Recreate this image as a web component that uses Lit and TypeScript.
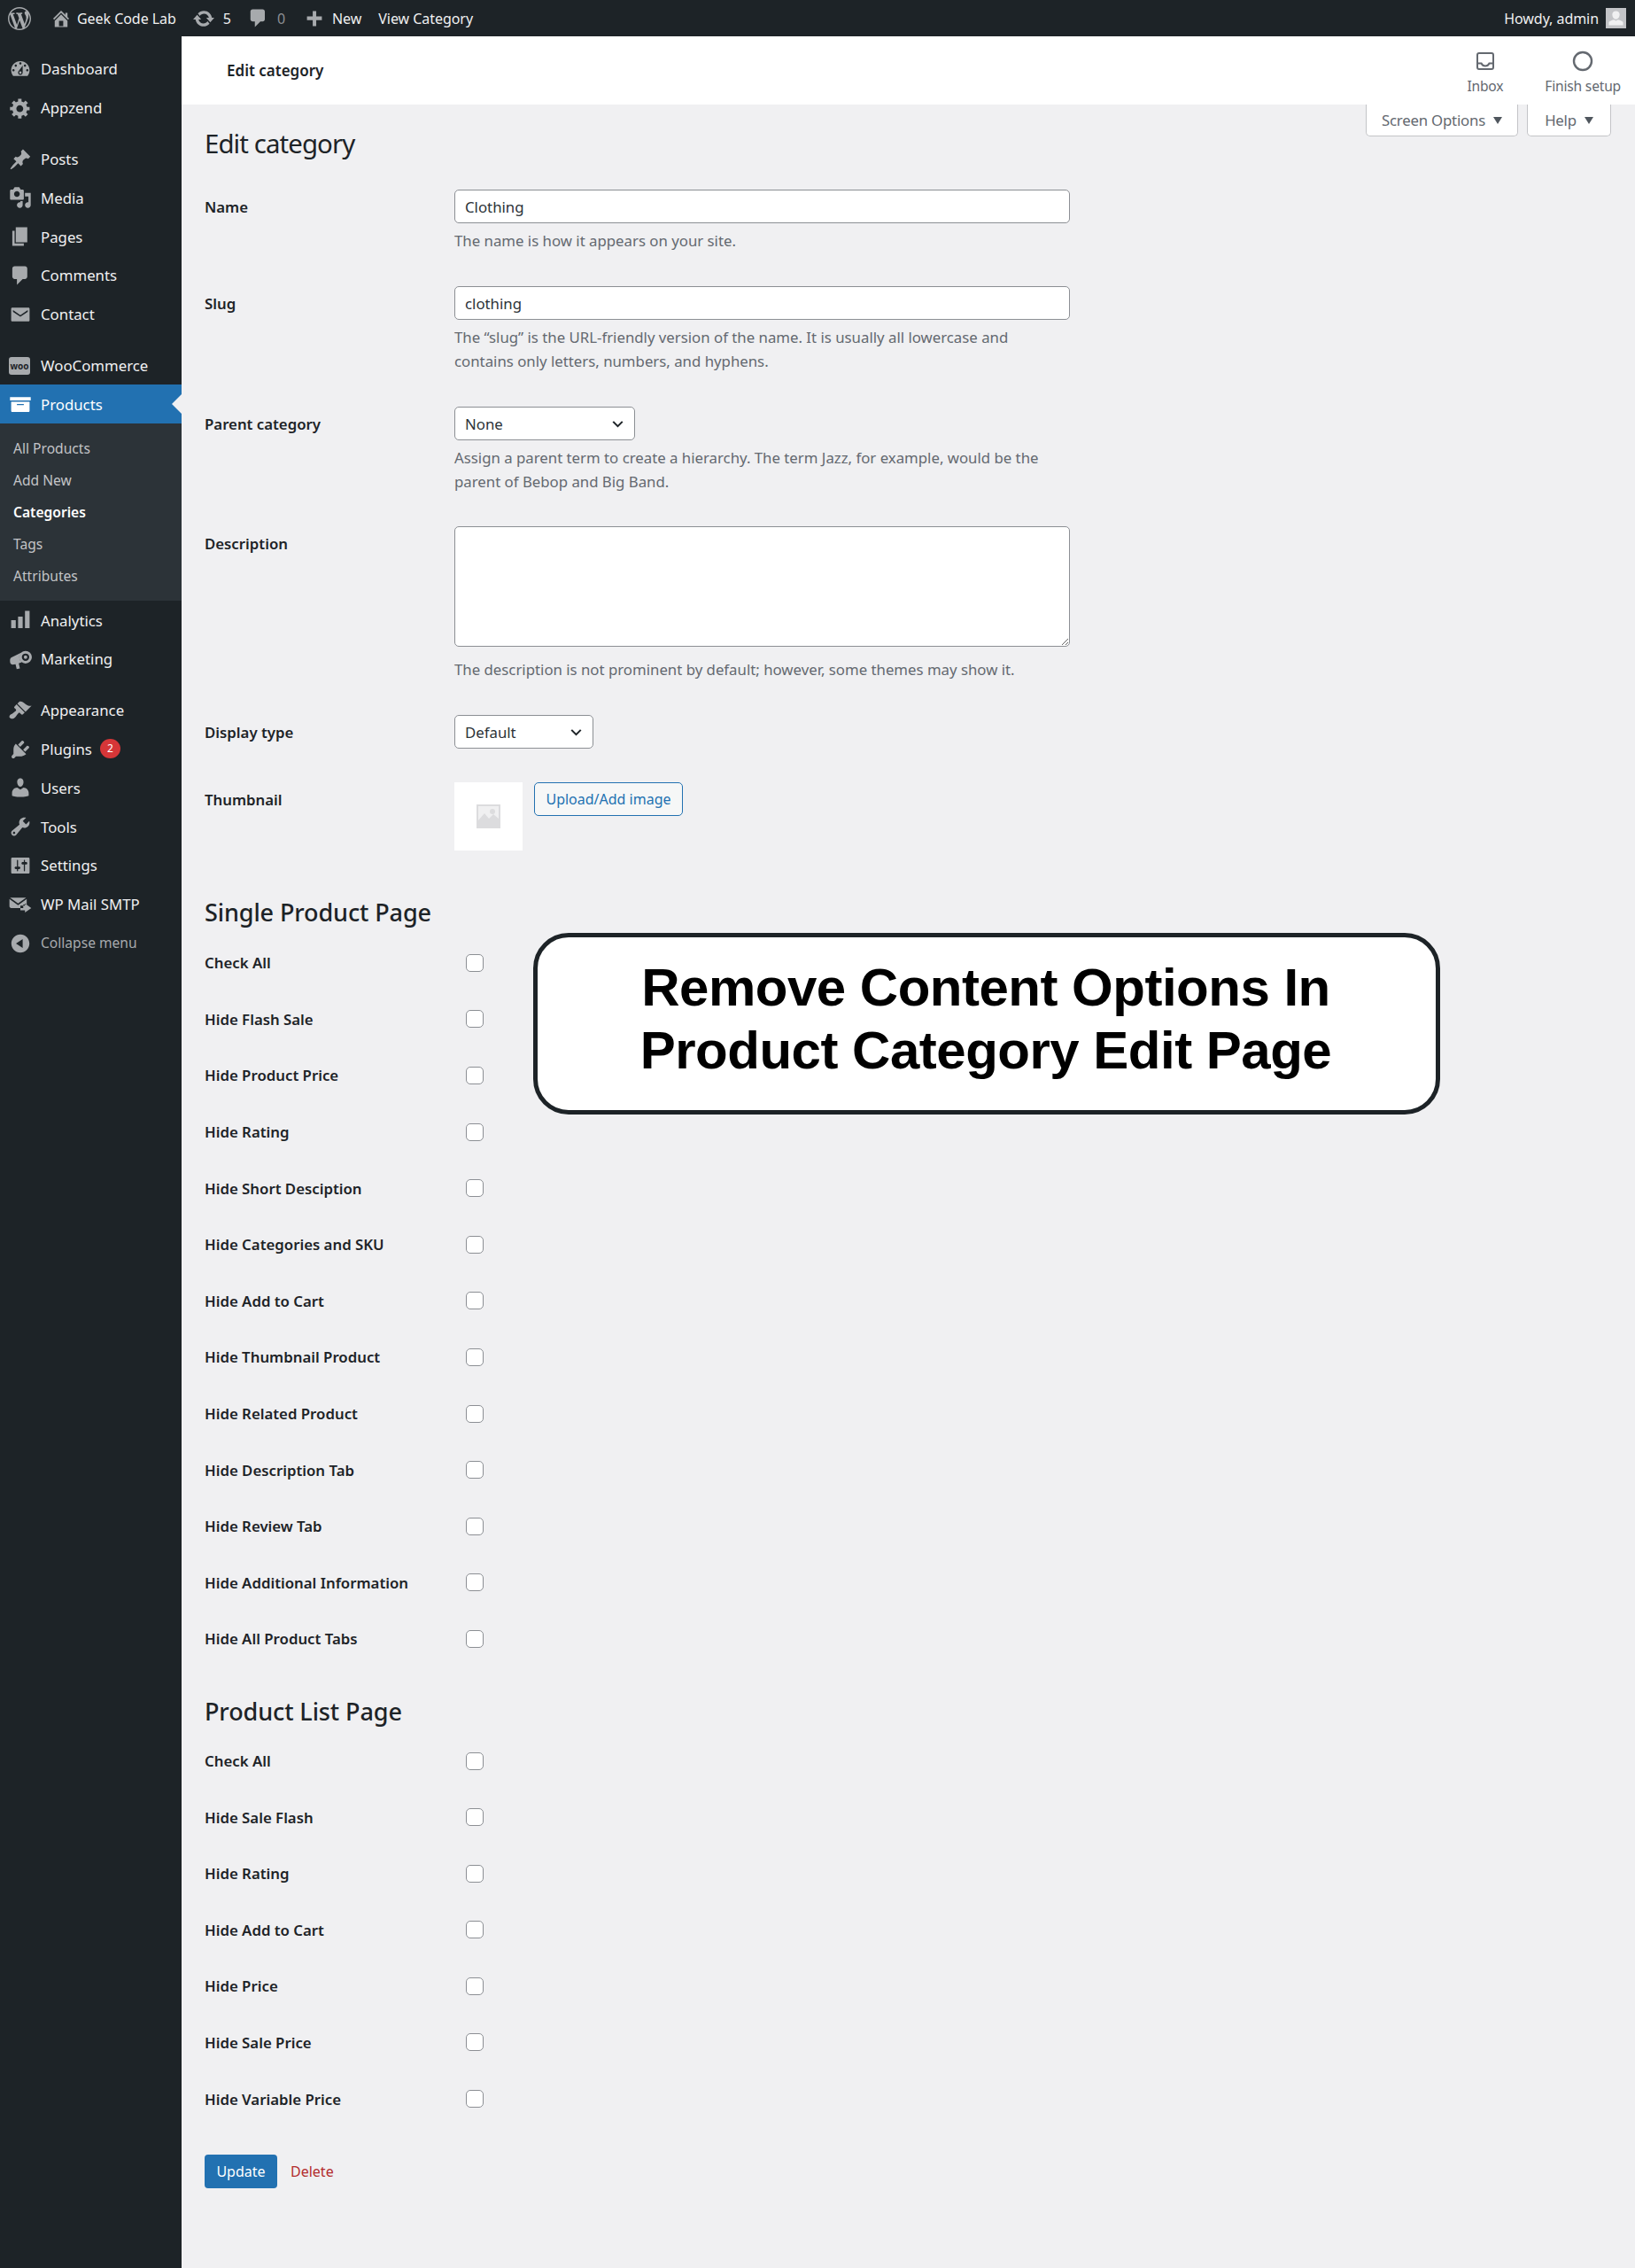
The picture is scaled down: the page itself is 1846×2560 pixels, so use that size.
import { LitElement, html, css } from 'lit';
import { customElement } from 'lit/decorators.js';

// dashicons, 20x20 box
const ICONS: Record<string, string> = {
    wp: 'M20 10c0-5.51-4.49-10-10-10C4.48 0 0 4.49 0 10c0 5.52 4.48 10 10 10 5.51 0 10-4.48 10-10zM7.78 15.37L4.37 6.22c.55-.02 1.17-.08 1.17-.08.5-.06.44-1.13-.06-1.11 0 0-1.45.11-2.37.11-.18 0-.37 0-.58-.01C4.12 2.69 6.87 1.11 10 1.11c2.33 0 4.45.87 6.05 2.34-.68-.11-1.65.39-1.65 1.58 0 .74.45 1.36.9 2.1.35.61.55 1.36.55 2.46 0 1.49-1.4 5-1.4 5l-3.03-8.37c.54-.02.82-.17.82-.17.5-.05.44-1.25-.06-1.22 0 0-1.44.12-2.38.12-.87 0-2.33-.12-2.33-.12-.5-.03-.56 1.2-.06 1.22l.92.08 1.26 3.41zM17.41 10c.24-.64.74-1.87.43-4.25.7 1.29 1.05 2.71 1.05 4.25 0 3.29-1.73 6.24-4.4 7.78.97-2.59 1.94-5.2 2.92-7.78zM6.1 18.09C3.12 16.65 1.11 13.53 1.11 10c0-1.3.23-2.48.72-3.59C3.25 10.3 4.67 14.2 6.1 18.09zm4.03-6.63l2.58 6.98c-.86.29-1.76.45-2.71.45-.79 0-1.57-.11-2.29-.33.81-2.38 1.62-4.74 2.42-7.1z',
    home: 'M16 8.5l1.53 1.53-1.06 1.06L10 4.62l-6.47 6.47-1.06-1.06L10 2.5l4 4v-2h2v4zm-6-2.46l6 5.99V18H4v-5.97zM12 17v-5H8v5h4z',
    update: 'M10.2 3.28c3.53 0 6.43 2.61 6.92 6h2.08l-3.5 4-3.5-4h2.32c-.45-1.97-2.21-3.45-4.32-3.45-1.45 0-2.73.71-3.54 1.78L4.95 5.66C6.23 4.2 8.11 3.28 10.2 3.28zm-.4 13.44c-3.52 0-6.43-2.61-6.92-6H.8l3.5-4c1.17 1.33 2.33 2.67 3.5 4H5.48c.45 1.97 2.21 3.45 4.32 3.45 1.45 0 2.73-.71 3.54-1.78l1.71 1.95c-1.28 1.46-3.15 2.38-5.25 2.38z',
    comment: 'M5 2h9c1.1 0 2 .9 2 2v7c0 1.1-.9 2-2 2h-2l-5 5v-5H5c-1.1 0-2-.9-2-2V4c0-1.1.9-2 2-2z',
    plus: 'M17 8v3.4h-5.3V17H8.4v-5.6H3V8h5.4V3h3.3v5H17z',
    dashboard: 'M3.76 16h12.48c1.1-1.37 1.76-3.11 1.76-5 0-4.42-3.58-8-8-8s-8 3.58-8 8c0 1.89.66 3.63 1.76 5zM10 4c.55 0 1 .45 1 1s-.45 1-1 1-1-.45-1-1 .45-1 1-1zM6 6c.55 0 1 .45 1 1s-.45 1-1 1-1-.45-1-1 .45-1 1-1zm8 0c.55 0 1 .45 1 1s-.45 1-1 1-1-.45-1-1 .45-1 1-1zm-5.37 5.55L12 7v6c0 1.1-.9 2-2 2s-2-.9-2-2c0-.57.24-1.08.63-1.45zM4 10c.55 0 1 .45 1 1s-.45 1-1 1-1-.45-1-1 .45-1 1-1zm12 0c.55 0 1 .45 1 1s-.45 1-1 1-1-.45-1-1 .45-1 1-1zm-5 3c0-.55-.45-1-1-1s-1 .45-1 1 .45 1 1 1 1-.45 1-1z',
    gear: 'M18 12h-2.18c-.17.7-.44 1.35-.81 1.93l1.54 1.54-2.1 2.1-1.54-1.54c-.58.36-1.23.63-1.91.79V19H8v-2.18c-.68-.16-1.33-.43-1.91-.79l-1.54 1.54-2.12-2.12 1.54-1.54c-.36-.58-.63-1.23-.79-1.91H1V9.03h2.17c.16-.7.44-1.35.8-1.94L2.43 5.55l2.1-2.1 1.54 1.54c.58-.37 1.24-.64 1.93-.81V2h3v2.18c.68.16 1.33.43 1.91.79l1.54-1.54 2.12 2.12-1.54 1.54c.36.59.64 1.24.8 1.94H18V12zm-8.5 1.5c1.66 0 3-1.34 3-3s-1.34-3-3-3-3 1.34-3 3 1.34 3 3 3z',
    pin: 'M10.44 3.02l1.82-1.82 6.36 6.35-1.83 1.82c-1.05-.68-2.48-.57-3.41.36l-.75.75c-.92.93-1.04 2.35-.35 3.41l-1.83 1.82-2.41-2.41-2.8 2.79c-.42.42-3.38 2.71-3.8 2.29s1.86-3.39 2.28-3.81l2.79-2.79L4.1 9.36l1.83-1.82c1.05.69 2.48.57 3.4-.36l.75-.75c.93-.92 1.05-2.35.36-3.41z',
    media: 'M13 11V4c0-.55-.45-1-1-1h-1.67L9 1H5L3.67 3H2c-.55 0-1 .45-1 1v7c0 .55.45 1 1 1h10c.55 0 1-.45 1-1zM7 4.5c1.38 0 2.5 1.12 2.5 2.5S8.38 9.5 7 9.5 4.5 8.38 4.5 7 5.62 4.5 7 4.5zM14 6h5v10.5c0 1.38-1.12 2.5-2.5 2.5S14 17.88 14 16.5s1.12-2.5 2.5-2.5c.17 0 .34.02.5.05V9h-3V6zm-4 8.05V13h2v3.5c0 1.38-1.12 2.5-2.5 2.5S7 17.88 7 16.5 8.12 14 9.5 14c.17 0 .34.02.5.05z',
    page: 'M6 15V2h10v13H6zm-1 1h8v2H3V5h2v11z',
    email: 'M3 4h14c.55 0 1 .45 1 1v10c0 .55-.45 1-1 1H3c-.55 0-1-.45-1-1V5c0-.55.45-1 1-1zm.6 2.2v1.5L10 12l6.4-4.3V6.2L10 10.5 3.6 6.2z',
    box: 'M1 4h18v3H1V4zm1 4h16v8c0 .55-.45 1-1 1H3c-.55 0-1-.45-1-1V8zm5 2v1h6v-1H7z',
    chart: 'M2 10h4v7H2v-7zm6-3h4v10H8V7zm6-5h4v15h-4V2z',
    megaphone: 'M2 8.6L10.6 4.4A5.5 5.5 0 0 0 11.2 12.7L8.6 13.6L9.6 18L6.8 18.6L5.8 14.4L3.2 14.8C1.6 14.8 1 13.5 1 11.6C1 10.2 1.2 9.1 2 8.6zM20 8.3A5.5 5.5 0 1 1 9 8.3A5.5 5.5 0 1 1 20 8.3zM17.7 8.3A3.2 3.2 0 1 0 11.3 8.3A3.2 3.2 0 1 0 17.7 8.3zM16 8.3A1.5 1.5 0 1 1 13 8.3A1.5 1.5 0 1 1 16 8.3z',
    brush: 'M14.48 11.06L7.41 3.99l1.5-1.5c.5-.56 2.3-.47 3.51.32 1.21.8 1.43 1.28 2.91 2.1 1.18.64 2.45 1.26 4.45.85zm-.71.71L6.7 4.7 4.93 6.47c-.39.39-.39 1.02 0 1.41l1.06 1.06c.39.39.39 1.03 0 1.42-.6.6-1.43 1.11-2.21 1.69-.35.26-.7.53-1.01.84C1.43 13.23.4 14.49.45 15.5c.02.21.05.51.06.51.41.37 1.38 1.19 2.2 1.2 1.17-.01 2.44-1.09 3.05-1.7.32-.32.6-.67.86-1.02.58-.78 1.09-1.6 1.69-2.21.39-.39 1.02-.39 1.41 0l1.06 1.07c.39.39 1.02.39 1.42 0z',
    plugin: 'M13.11 4.36L9.87 7.6 8 5.73l3.24-3.24c.35-.34 1.05-.2 1.56.32.52.51.66 1.21.31 1.55zm-8 1.77l.91-1.12 9.01 9.01-1.19.84c-.71.71-2.63 1.16-3.82 1.16H6.14L4.9 17.26c-.59.59-1.54.59-2.12 0-.59-.58-.59-1.53 0-2.12l1.24-1.24v-3.88c0-1.13.4-3.19 1.09-3.89zm7.26 3.97l3.24-3.24c.34-.35 1.04-.21 1.55.31.52.51.66 1.21.31 1.55l-3.24 3.25z',
    users: 'M10 9.25c-2.27 0-2.73-3.44-2.73-3.44C7 4.02 7.82 2 9.97 2c2.16 0 2.98 2.02 2.71 3.81 0 0-.41 3.44-2.68 3.44zm0 2.57L12.72 10c2.39 0 4.52 2.33 4.52 4.53v2.49s-3.65 1.13-7.24 1.13c-3.65 0-7.24-1.13-7.24-1.13v-2.49c0-2.25 1.94-4.48 4.47-4.48z',
    tools: 'M16.68 9.77c-1.34 1.34-3.3 1.67-4.95.99l-5.41 6.52c-.99.99-2.59.99-3.58 0s-.99-2.59 0-3.57l6.52-5.42c-.68-1.65-.35-3.61.99-4.95 1.28-1.28 3.12-1.62 4.72-1.06l-2.89 2.89 2.82 2.82 2.86-2.87c.53 1.58.18 3.39-1.08 4.65zM3.81 16.21c.4.39 1.04.39 1.43 0 .4-.4.4-1.04 0-1.43-.39-.4-1.03-.4-1.43 0-.39.39-.39 1.03 0 1.43z',
    settings: 'M18 16V4c0-.55-.45-1-1-1H3c-.55 0-1 .45-1 1v12c0 .55.45 1 1 1h14c.55 0 1-.45 1-1zM8 11h1c.55 0 1 .45 1 1s-.45 1-1 1H8v1.5c0 .28-.22.5-.5.5s-.5-.22-.5-.5V13H6c-.55 0-1-.45-1-1s.45-1 1-1h1V5.5c0-.28.22-.5.5-.5s.5.22.5.5V11zm5-2h-1c-.55 0-1-.45-1-1s.45-1 1-1h1V5.5c0-.28.22-.5.5-.5s.5.22.5.5V7h1c.55 0 1 .45 1 1s-.45 1-1 1h-1v5.5c0 .28-.22.5-.5.5s-.5-.22-.5-.5V9z',
    smtp: 'M1 4h14l-7 5-7-5zm-.5 1.2L8 10.6l7.5-5.4V10h-3v3H2c-.8 0-1.5-.7-1.5-1.5V5.2zM14 11v-2l5.5 4-5.5 4v-2h-4v-4h4z',
    collapse: 'M10 2.16c4.33 0 7.84 3.51 7.84 7.84s-3.51 7.84-7.84 7.84S2.16 14.33 2.16 10 5.71 2.16 10 2.16zm2 11.72V6.12L6.18 9.97z',
    avatar: 'M10 11c-2.6 0-3.6-2.6-3.6-4.6S7.8 3 10 3s3.6 1.4 3.6 3.4S12.6 11 10 11zm-7 6v-2.4c0-1.4 2.6-2.4 5-3l2 1 2-1c2.4.6 5 1.6 5 3V17H3z',
};

const icon = (name: string) => html`<svg class="ico" viewBox="0 0 20 20"><path fill-rule="evenodd" d=${ICONS[name]}></path></svg>`;

const chevron = html`<svg class="chev" viewBox="0 0 20 20"><path d="M5 7.5l5 5 5-5" fill="none" stroke="#1d2327" stroke-width="2"></path></svg>`;

type MenuItem = { label: string; icon: string; gap?: boolean; badge?: string };

const menuTop: MenuItem[] = [
    { label: 'Dashboard', icon: 'dashboard' },
    { label: 'Appzend', icon: 'gear' },
    { label: 'Posts', icon: 'pin', gap: true },
    { label: 'Media', icon: 'media' },
    { label: 'Pages', icon: 'page' },
    { label: 'Comments', icon: 'comment' },
    { label: 'Contact', icon: 'email' },
    { label: 'WooCommerce', icon: 'woo', gap: true },
];

const menuBottom: MenuItem[] = [
    { label: 'Analytics', icon: 'chart' },
    { label: 'Marketing', icon: 'megaphone' },
    { label: 'Appearance', icon: 'brush', gap: true },
    { label: 'Plugins', icon: 'plugin', badge: '2' },
    { label: 'Users', icon: 'users' },
    { label: 'Tools', icon: 'tools' },
    { label: 'Settings', icon: 'settings' },
    { label: 'WP Mail SMTP', icon: 'smtp' },
];

const subMenu = ['All Products', 'Add New', 'Categories', 'Tags', 'Attributes'];

const singleChecks = [
    'Check All', 'Hide Flash Sale', 'Hide Product Price', 'Hide Rating', 'Hide Short Desciption',
    'Hide Categories and SKU', 'Hide Add to Cart', 'Hide Thumbnail Product', 'Hide Related Product',
    'Hide Description Tab', 'Hide Review Tab', 'Hide Additional Information', 'Hide All Product Tabs',
];

const listChecks = [
    'Check All', 'Hide Sale Flash', 'Hide Rating', 'Hide Add to Cart', 'Hide Price', 'Hide Sale Price', 'Hide Variable Price',
];

@customElement('app-root')
export class AppRoot extends LitElement {
    static styles = css`
        :host {
            display: block;
            min-height: 2560px;
            background: #f0f0f2;
            color: #1d2327;
            font-family: "Noto Sans", "Open Sans", sans-serif;
            font-size: 16.8px;
        }
        * { box-sizing: border-box; }
        .ico { width: 100%; height: 100%; fill: currentColor; display: block; }

        .topbar {
            height: 41px;
            background: #1d2327;
            color: #f0f0f1;
            display: flex;
            align-items: center;
            padding: 0 10px 0 9px;
            font-size: 16px;
            letter-spacing: -0.05px;
        }
        .topbar .wp { width: 26px; height: 26px; color: #a7aaad; margin-right: 22px; }
        .topbar .bi { color: #a7aaad; flex: none; }
        .topbar .home { width: 24px; height: 24px; margin-right: 6px; }
        .topbar .upd { width: 26px; height: 26px; margin-left: 18px; margin-right: 9px; }
        .topbar .cmt { width: 25px; height: 25px; margin-left: 18px; margin-right: 9px; }
        .topbar .dim { color: #8c8f94; }
        .topbar .plus { width: 24px; height: 24px; margin-left: 21px; margin-right: 8px; }
        .topbar .view { margin-left: 19px; }
        .topbar .howdy { margin-left: auto; margin-right: 8px; }
        .avatar { width: 23px; height: 23px; background: #c3c4c7; color: #f0f0f1; }

        .body { display: flex; min-height: 2519px; }

        .sidebar {
            width: 205px;
            flex: none;
            background: #1d2327;
            color: #f0f0f1;
            padding-top: 15px;
        }
        .item {
            height: 43.8px;
            display: flex;
            align-items: center;
            padding-left: 46px;
            position: relative;
        }
        .item.gap { margin-top: 14px; }
        .item .mi {
            position: absolute;
            left: 10px;
            top: 9px;
            width: 26px;
            height: 26px;
            color: #a7aaad;
        }
        .woo {
            width: 24px;
            height: 20px;
            margin-top: 3px;
            background: #a7aaad;
            color: #1d2327;
            border-radius: 3px;
            font-size: 10px;
            font-weight: 700;
            line-height: 20px;
            text-align: center;
        }
        .item.current { background: #2271b1; color: #fff; }
        .item.current .mi { color: #fff; }
        .item.current::after {
            content: '';
            position: absolute;
            right: 0;
            top: 11px;
            border: 11px solid transparent;
            border-right-color: #f0f0f2;
            border-left-width: 0;
        }
        .badge {
            margin-left: 9px;
            width: 23px;
            height: 22px;
            border-radius: 50%;
            background: #d63638;
            color: #fff;
            font-size: 12px;
            line-height: 22px;
            text-align: center;
        }
        .sub { background: #2c3338; padding: 10px 0; color: #c3c4c7; font-size: 15.6px; }
        .sub div { height: 36px; line-height: 36px; padding-left: 15px; }
        .sub .on { color: #fff; font-weight: 600; }
        .collapse { color: #a7aaad; font-size: 15.6px; }

        .main { flex: 1; position: relative; }

        .header {
            height: 77px;
            background: #fff;
            display: flex;
            align-items: center;
            padding: 0 16px 0 51px;
        }
        .header .title { font-weight: 600; font-size: 17px; color: #1d2327; flex: 1; margin-top: -1px; }
        .act {
            display: flex;
            flex-direction: column;
            align-items: center;
            color: #646970;
            font-size: 15.6px;
            letter-spacing: -0.2px;
            gap: 5px;
            padding-top: 5px;
        }
        .act svg { width: 24px; height: 24px; display: block; }
        .act.inbox { margin-right: 47px; }

        .wrap { padding: 0 27px 0 26px; }

        .headline { display: flex; justify-content: space-between; align-items: flex-start; height: 66px; margin-bottom: 30px; }
        h1 { margin: 23px 0 0; font-size: 29.4px; line-height: 42px; font-weight: 400; letter-spacing: -0.9px; }
        .tabs { display: flex; gap: 10px; }
        .tab {
            height: 36px;
            background: #fff;
            border: 1px solid #c3c4c7;
            border-top: none;
            border-radius: 0 0 5px 5px;
            color: #646970;
            display: flex;
            align-items: center;
            justify-content: center;
            gap: 9px;
            letter-spacing: -0.2px;
        }
        .tab::after { content: ''; border: 5.5px solid transparent; border-top: 8px solid #50575e; border-bottom: none; }
        .tab.opts { width: 172px; }
        .tab.tab-help { width: 95px; }

        .field { display: grid; grid-template-columns: 282px 695px; margin-bottom: 38px; }
        .field.close { margin-bottom: 37px; }
        .label { font-weight: 600; height: 38px; line-height: 39px; }
        input.text, textarea {
            display: block;
            width: 695px;
            background: #fff;
            border: 1px solid #8c8f94;
            border-radius: 5px;
            font: inherit;
            color: #2c3338;
            outline: none;
            margin: 0;
        }
        input.text { height: 38px; padding: 0 11px; }
        textarea { height: 136px; padding: 6px 11px; }
        .help { color: #646970; line-height: 27px; margin-top: 6px; }
        .help.far { margin-top: 12px; }
        .select {
            height: 38px;
            background: #fff;
            border: 1px solid #8c8f94;
            border-radius: 5px;
            color: #2c3338;
            display: flex;
            align-items: center;
            justify-content: space-between;
            padding: 0 8px 0 11px;
        }
        .chev { width: 21px; height: 21px; display: block; }
        .thumb-cell { display: flex; gap: 13px; align-items: flex-start; }
        .thumb { width: 77px; height: 77px; background: #fff; display: flex; align-items: center; justify-content: center; }
        .thumb svg { width: 27px; height: 27px; display: block; }
        .upload {
            height: 38px;
            width: 168px;
            border: 1px solid #2271b1;
            border-radius: 5px;
            background: #f6f7f7;
            color: #2271b1;
            font-size: 16px;
            display: flex;
            align-items: center;
            justify-content: center;
        }

        h2 { margin: 0; font-size: 27px; line-height: 40px; font-weight: 500; letter-spacing: -0.1px; }
        h2.first { margin-top: 50px; margin-bottom: 5px; }
        h2.second { margin-top: 30px; margin-bottom: 4px; }
        .check { display: grid; grid-template-columns: 295px 20px; align-items: center; height: 63.6px; font-weight: 600; }
        .check input {
            appearance: none;
            width: 20px;
            height: 20px;
            margin: 0;
            background: #fff;
            border: 1px solid #8c8f94;
            border-radius: 5px;
        }

        .actions { display: flex; align-items: center; gap: 15px; margin-top: 31px; font-size: 16px; }
        .update {
            width: 82px;
            height: 38px;
            background: #2271b1;
            color: #fff;
            border-radius: 4px;
            display: flex;
            align-items: center;
            justify-content: center;
        }
        .delete { color: #b32d2e; }

        .callout {
            position: absolute;
            left: 397px;
            top: 1012px;
            width: 1024px;
            height: 205px;
            padding: 0 2px 11px 0;
            background: #fff;
            border: 5px solid #1d2327;
            border-radius: 40px;
            display: flex;
            align-items: center;
            justify-content: center;
            text-align: center;
            color: #000;
            font-family: "Liberation Sans", Arial, sans-serif;
            font-weight: 700;
            font-size: 60px;
            line-height: 71px;
            letter-spacing: -0.5px;
        }
    `;

    menuRow(m: MenuItem) {
        const glyph = m.icon === 'woo' ? html`<div class="woo">woo</div>` : icon(m.icon);
        return html`
        <div class="item ${m.gap ? 'gap' : ''}">
            <span class="mi">${glyph}</span>
            ${m.label}
            ${m.badge ? html`<span class="badge">${m.badge}</span>` : ''}
        </div>`;
    }

    checkRow(label: string) {
        return html`<div class="check"><span>${label}</span><input type="checkbox" /></div>`;
    }

    render() {
        return html`
        <div class="topbar">
            <span class="bi wp">${icon('wp')}</span>
            <span class="bi home">${icon('home')}</span>
            <span>Geek Code Lab</span>
            <span class="bi upd">${icon('update')}</span>
            <span>5</span>
            <span class="bi cmt">${icon('comment')}</span>
            <span class="dim">0</span>
            <span class="bi plus">${icon('plus')}</span>
            <span>New</span>
            <span class="view">View Category</span>
            <span class="howdy">Howdy, admin</span>
            <span class="avatar">${icon('avatar')}</span>
        </div>
        <div class="body">
            <nav class="sidebar">
                ${menuTop.map(m => this.menuRow(m))}
                <div class="item current"><span class="mi">${icon('box')}</span>Products</div>
                <div class="sub">
                    ${subMenu.map(s => html`<div class=${s === 'Categories' ? 'on' : ''}>${s}</div>`)}
                </div>
                ${menuBottom.map(m => this.menuRow(m))}
                <div class="item collapse"><span class="mi">${icon('collapse')}</span>Collapse menu</div>
            </nav>
            <main class="main">
                <div class="header">
                    <div class="title">Edit category</div>
                    <div class="act inbox">
                        <svg viewBox="0 0 24 24" fill="none" stroke="#646970" stroke-width="2">
                            <rect x="3" y="3" width="18" height="18" rx="2"></rect>
                            <path d="M3 14.5h4.5c1 2.2 2.5 3 4.5 3s3.5-.8 4.5-3H21"></path>
                        </svg>
                        <span>Inbox</span>
                    </div>
                    <div class="act">
                        <svg viewBox="0 0 24 24" fill="none" stroke="#646970" stroke-width="2.4"><circle cx="12" cy="12" r="10"></circle></svg>
                        <span>Finish setup</span>
                    </div>
                </div>
                <div class="wrap">
                    <div class="headline">
                        <h1>Edit category</h1>
                        <div class="tabs">
                            <div class="tab opts">Screen Options</div>
                            <div class="tab tab-help">Help</div>
                        </div>
                    </div>

                    <div class="field">
                        <div class="label">Name</div>
                        <div>
                            <input class="text" type="text" value="Clothing" />
                            <div class="help">The name is how it appears on your site.</div>
                        </div>
                    </div>
                    <div class="field">
                        <div class="label">Slug</div>
                        <div>
                            <input class="text" type="text" value="clothing" />
                            <div class="help">The “slug” is the URL-friendly version of the name. It is usually all lowercase and contains only letters, numbers, and hyphens.</div>
                        </div>
                    </div>
                    <div class="field close">
                        <div class="label">Parent category</div>
                        <div>
                            <div class="select" style="width: 204px">None ${chevron}</div>
                            <div class="help">Assign a parent term to create a hierarchy. The term Jazz, for example, would be the parent of Bebop and Big Band.</div>
                        </div>
                    </div>
                    <div class="field">
                        <div class="label">Description</div>
                        <div>
                            <textarea></textarea>
                            <div class="help far">The description is not prominent by default; however, some themes may show it.</div>
                        </div>
                    </div>
                    <div class="field">
                        <div class="label">Display type</div>
                        <div class="select" style="width: 157px">Default ${chevron}</div>
                    </div>
                    <div class="field">
                        <div class="label">Thumbnail</div>
                        <div class="thumb-cell">
                            <div class="thumb">
                                <svg viewBox="0 0 27 27">
                                    <rect width="27" height="27" fill="#dcdcde"></rect>
                                    <path d="M2 2h23v14l-6-5-5 5-5-6-7 8z" fill="#f0f0f1"></path>
                                    <circle cx="18" cy="8" r="3" fill="#dcdcde"></circle>
                                </svg>
                            </div>
                            <div class="upload">Upload/Add image</div>
                        </div>
                    </div>

                    <h2 class="first">Single Product Page</h2>
                    ${singleChecks.map(c => this.checkRow(c))}

                    <h2 class="second">Product List Page</h2>
                    ${listChecks.map(c => this.checkRow(c))}

                    <div class="actions">
                        <div class="update">Update</div>
                        <div class="delete">Delete</div>
                    </div>
                </div>
                <div class="callout"><div>Remove Content Options In<br />Product Category Edit Page</div></div>
            </main>
        </div>
        `;
    }
}

declare global {
    interface HTMLElementTagNameMap {
        'app-root': AppRoot;
    }
}
